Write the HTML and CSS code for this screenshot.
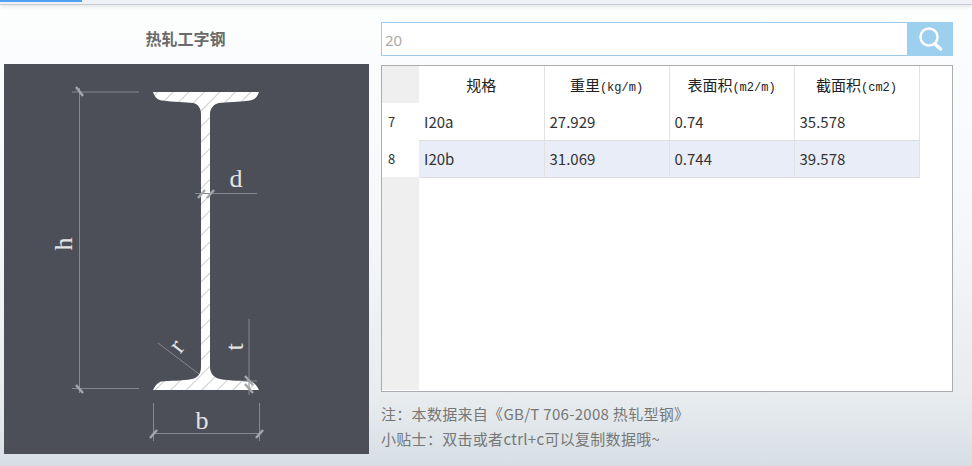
FILE: index.html
```html
<!DOCTYPE html>
<html lang="zh-CN">
<head>
    <meta charset="UTF-8">
    <title>热轧工字钢</title>
    <link rel="stylesheet" href="styles.css">
</head>
<body>
    <div class="topbar"><div class="tab-active"></div></div>

    <div class="main">
        <div class="left">
            <h1 class="title">热轧工字钢</h1>
            <div class="diagram">
                <svg class="drawing" viewBox="4 64 365 390" width="365" height="390">
                    <defs>
                        <pattern id="hatch" width="11" height="11" patternUnits="userSpaceOnUse" patternTransform="rotate(45)">
                            <rect width="11" height="11" fill="#fff"/>
                            <line x1="0" y1="0" x2="0" y2="11" stroke="#a9abae" stroke-width="1.2"/>
                        </pattern>
                    </defs>

                    <path class="section" d="M153 92 H259 C257 98 254 100 250 100.500 C238 102 226 102 219 103 C214 104 210 108 210 114 V367 C210 373 214 378 220 379 C230 381 242 380.500 251 381.500 C255 383 257 386 259 390 H153 C155 386 157 383 161 381.500 C170 380.500 182 381 192 379 C198 378 201 373 201 367 V114 C201 108 198 104 193 103 C186 102 174 102 162 100.500 C158 100 155 98 153 92 Z"/>

                    <g class="dim">
                        <path d="M72 92 H139 M72 388.500 H139 M79.500 88 V393"/>
                        <path d="M195 193.500 H257"/>
                        <path d="M158 343 L199 374"/>
                        <path d="M249 319 V395 M243 381 H257"/>
                        <path d="M153.500 403 V441 M259.500 403 V441 M153 433.500 H260"/>
                    </g>
                    <g class="tick">
                        <path d="M76 87 L83 96 M76 385 L83 393"/>
                        <path d="M198 198 L205 190 M207 198 L214 190"/>
                        <path d="M245 376 L253 385 M245 384 L253 393"/>
                        <path d="M150 438 L157 430 M256 438 L263 430"/>
                    </g>

                    <text class="letter" x="236" y="187" text-anchor="middle">d</text>
                    <text class="letter" x="202" y="429" text-anchor="middle">b</text>
                    <text class="letter" transform="translate(72 244) rotate(-90)" text-anchor="middle">h</text>
                    <text class="letter" transform="translate(243 347) rotate(-90)" text-anchor="middle">t</text>
                    <text class="letter" transform="translate(183 351) rotate(-52)" text-anchor="middle">r</text>
                </svg>
            </div>
        </div>

        <div class="right">
            <div class="search">
                <input class="search-input" type="text" value="20">
                <button class="search-btn">
                    <svg viewBox="0 0 46 34" width="46" height="34">
                        <circle cx="22" cy="15" r="8.500" fill="none" stroke="#fff" stroke-width="2.500"/>
                        <path d="M28 22 L33.500 27" stroke="#fff" stroke-width="3.500" stroke-linecap="round"/>
                    </svg>
                </button>
            </div>

            <div class="table-box">
                <table class="data-table">
                    <thead>
                        <tr>
                            <th class="row-head"></th>
                            <th>规格</th>
                            <th>重里<span class="unit">(kg/m)</span></th>
                            <th>表面积<span class="unit">(m2/m)</span></th>
                            <th>截面积<span class="unit">(cm2)</span></th>
                        </tr>
                    </thead>
                    <tbody>
                        <tr>
                            <td class="row-num">7</td>
                            <td>I20a</td>
                            <td>27.929</td>
                            <td>0.74</td>
                            <td>35.578</td>
                        </tr>
                        <tr class="alt">
                            <td class="row-num">8</td>
                            <td>I20b</td>
                            <td>31.069</td>
                            <td>0.744</td>
                            <td>39.578</td>
                        </tr>
                        <tr class="filler">
                            <td class="row-head"></td>
                            <td colspan="4"></td>
                        </tr>
                    </tbody>
                </table>
            </div>

            <div class="notes">
                <p>注&#xFF1A;本数据来自《GB/T 706-2008 热轧型钢》</p>
                <p>小贴士&#xFF1A;双击或者ctrl+c可以复制数据哦~</p>
            </div>
        </div>
    </div>
</body>
</html>
```

FILE: styles.css
```css
* {
    box-sizing: border-box;
}

html, body {
    height: 100%;
}

body {
    margin: 0;
    overflow: hidden;
    font-family: "Noto Sans CJK SC", "Noto Sans", sans-serif;
    background: linear-gradient(#fdfefe 0%, #f5f7f9 50%, #e8ecef 85%, #d7dfe4 100%);
}

.topbar {
    height: 5px;
    background-color: #eef1f5;
    border-bottom: 1px solid #c6ccd3;
    box-shadow: 0 1px 4px rgba(120, 130, 140, 0.25);
}

.tab-active {
    width: 82px;
    height: 2px;
    background-color: #4f9ff2;
}

.main {
    display: flex;
    gap: 12px;
    padding: 0 19px 0 4px;
}

.left {
    width: 365px;
}

.title {
    height: 59px;
    margin: 0;
    padding: 7px 2px 0 0;
    display: flex;
    align-items: center;
    justify-content: center;
    font-size: 16px;
    font-weight: 700;
    color: #6a6a6a;
}

.diagram {
    height: 390px;
    background-color: #4c4f58;
}

.drawing {
    display: block;
}

.section {
    fill: url(#hatch);
}

.dim {
    fill: none;
    stroke: #85888e;
    stroke-width: 1;
}

.tick {
    fill: none;
    stroke: #a4a6aa;
    stroke-width: 2.500;
}

.letter {
    font-family: "Liberation Serif", serif;
    font-size: 26px;
    fill: #e4e4e4;
}

.right {
    width: 572px;
    padding-top: 17px;
}

.search {
    display: flex;
    height: 34px;
    border: 1px solid #9ccbec;
    background-color: #fff;
}

.search-input {
    flex: 1;
    min-width: 0;
    border: none;
    outline: none;
    padding: 2px 3px 0;
    font-family: "Noto Sans", sans-serif;
    font-size: 15px;
    color: #aaa;
    background: transparent;
}

.search-btn {
    width: 46px;
    margin: -1px;
    padding: 0;
    border: none;
    background-color: #9dcfee;
}

.search-btn svg {
    display: block;
}

.table-box {
    height: 327px;
    margin-top: 9px;
    border: 1px solid #a9adb1;
    background-color: #fff;
}

.data-table {
    width: 537px;
    table-layout: fixed;
    border-collapse: collapse;
    font-size: 15px;
    color: #333;
}

.data-table th,
.data-table td {
    width: 125px;
    padding: 0;
}

.data-table th {
    height: 37px;
    font-size: 15px;
    font-weight: 400;
    color: #222;
    border-right: 1px solid #e2e2e2;
}

.data-table .row-head,
.data-table .row-num {
    width: 37px;
    border-right: none;
}

.data-table .row-head {
    background-color: #efefef;
}

.unit {
    font-family: "Liberation Mono", monospace;
    font-size: 12px;
}

.data-table td {
    height: 37px;
    padding-left: 5px;
    border-right: 1px solid #e2e2e2;
    border-bottom: 1px solid #dedede;
}

.data-table .row-num {
    padding-left: 6px;
    font-size: 13px;
    border-bottom: none;
}

.alt td {
    background-color: #e9edf7;
}

.alt .row-num {
    background-color: #fff;
}

.filler td {
    height: 213px;
    border: none;
}

.notes {
    margin-top: 9px;
    font-size: 15px;
    letter-spacing: 0.3px;
    color: #777;
}

.notes p {
    margin: 0;
    height: 25px;
    line-height: 25px;
}
```
